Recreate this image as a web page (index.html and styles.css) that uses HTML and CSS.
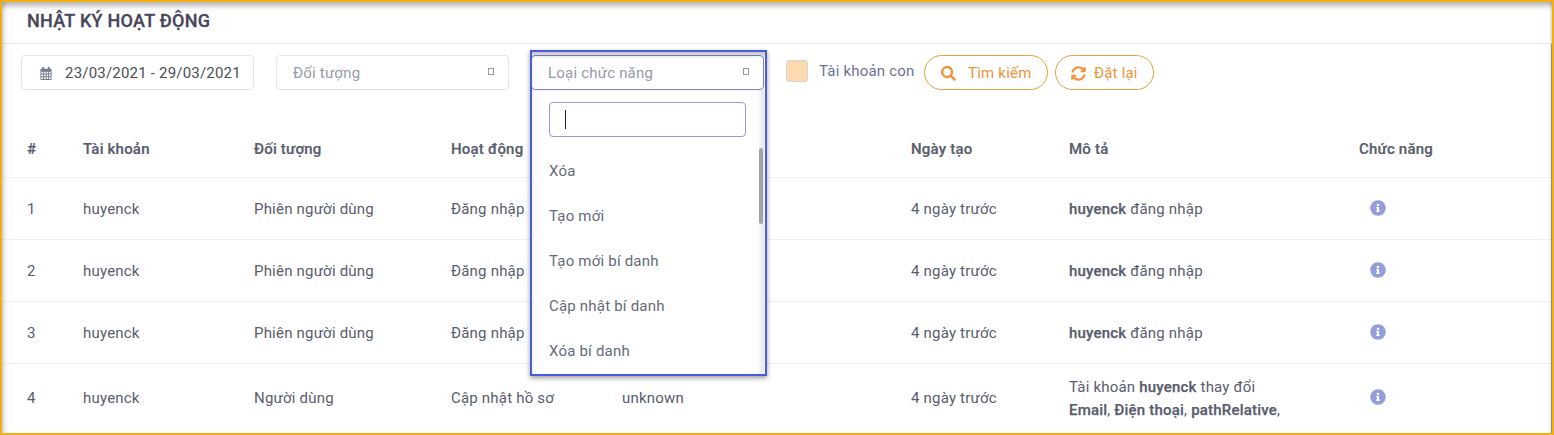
FILE: index.html
```html
<!DOCTYPE html>
<html lang="vi">
<head>
<meta charset="utf-8">
<title>Nhật ký hoạt động</title>
<link rel="stylesheet" href="styles.css">
</head>
<body>
<svg class="defs" width="0" height="0">
  <symbol id="info" viewBox="0 0 512 512"><path fill="currentColor" d="M256 8C119 8 8 119 8 256s111 248 248 248 248-111 248-248S393 8 256 8zm0 110c23 0 42 19 42 42s-19 42-42 42-42-19-42-42 19-42 42-42zm56 254c0 7-5 12-12 12h-88c-7 0-12-5-12-12v-24c0-7 5-12 12-12h12v-64h-12c-7 0-12-5-12-12v-24c0-7 5-12 12-12h64c7 0 12 5 12 12v100h12c7 0 12 5 12 12z"/></symbol>
</svg>
<main class="page">
  <header class="title-bar"><h1 class="title">NHẬT KÝ HOẠT ĐỘNG</h1></header>
  <section class="filters">
    <div class="field date">
      <svg class="calendar" viewBox="0 0 12 14"><path fill="currentColor" fill-rule="evenodd" d="M2 0h2v2h4V0h2v2h1q1 0 1 1v10q0 1-1 1H1q-1 0-1-1V3q0-1 1-1h1zM1 5v2h2V5zm3 0v2h1.700V5zm2.600 0v2h1.700V5zM9.200 5v2H11V5zM1 8v2h2V8zm3 0v2h1.700V8zm2.600 0v2h1.700V8zm2.600 0v2H11V8zM1 11v2h2v-2zm3 0v2h1.700v-2zm2.600 0v2h1.700v-2zm2.600 0v2H11v-2z"/></svg>
      <span>23/03/2021 - 29/03/2021</span>
    </div>
    <div class="field select"><span>Đối tượng</span><i class="box"></i></div>
    <div class="select-wrap">
      <div class="field select active"><span>Loại chức năng</span><i class="box"></i></div>
      <div class="menu">
        <div class="search"><i class="caret"></i></div>
        <ul class="options">
          <li>Xóa</li><li>Tạo mới</li><li>Tạo mới bí danh</li><li>Cập nhật bí danh</li><li>Xóa bí danh</li>
        </ul>
        <i class="thumb"></i>
      </div>
      <div class="highlight"></div>
    </div>
    <label class="check"><i class="tick"></i><span>Tài khoản con</span></label>
    <div class="button find">
      <svg viewBox="0 0 512 512"><path fill="currentColor" d="M505 442.700L405.300 343c-4.500-4.500-10.600-7-17-7H372c27.600-35.300 44-79.700 44-128C416 93.100 322.900 0 208 0S0 93.100 0 208s93.100 208 208 208c48.300 0 92.700-16.400 128-44v16.300c0 6.400 2.500 12.500 7 17l99.700 99.700c9.400 9.400 24.600 9.400 33.900 0l28.300-28.300c9.400-9.400 9.400-24.600.1-34zM208 336c-70.700 0-128-57.200-128-128 0-70.700 57.200-128 128-128 70.700 0 128 57.200 128 128 0 70.700-57.200 128-128 128z"/></svg>
      <span>Tìm kiếm</span>
    </div>
    <div class="button reset">
      <svg viewBox="0 0 512 512"><path fill="currentColor" d="M370.700 133.300C339.500 104 298.900 88 255.800 88c-77.500.1-144.300 53.200-162.800 126.900-1.300 5.400-6.100 9.100-11.700 9.100H24.100c-7.500 0-13.200-6.800-11.800-14.200C33.900 94.900 134.800 8 256 8c66.400 0 126.800 26.100 171.300 68.700L463 41c15.100-15.100 41-4.400 41 17v134c0 13.300-10.700 24-24 24H346c-21.400 0-32.100-25.900-17-41zM32 296h134c21.400 0 32.100 25.900 17 41l-41.800 41.800c31.300 29.300 71.800 45.300 114.900 45.300 77.400-.1 144.300-53.100 162.800-126.800 1.300-5.400 6.100-9.100 11.700-9.100h57.300c7.500 0 13.200 6.800 11.800 14.200C478.100 417.100 377.200 504 256 504c-66.400 0-126.800-26.100-171.300-68.700L49 471c-15.100 15.100-41 4.400-41-17V320c0-13.300 10.700-24 24-24z"/></svg>
      <span>Đặt lại</span>
    </div>
  </section>
  <section class="table">
    <div class="row head"><span>#</span><span>Tài khoản</span><span>Đối tượng</span><span>Hoạt động</span><span></span><span>Ngày tạo</span><span>Mô tả</span><span>Chức năng</span></div>
    <div class="row"><span>1</span><span>huyenck</span><span>Phiên người dùng</span><span>Đăng nhập</span><span></span><span>4 ngày trước</span><span><b>huyenck</b> đăng nhập</span><svg class="info"><use href="#info"/></svg></div>
    <div class="row"><span>2</span><span>huyenck</span><span>Phiên người dùng</span><span>Đăng nhập</span><span></span><span>4 ngày trước</span><span><b>huyenck</b> đăng nhập</span><svg class="info"><use href="#info"/></svg></div>
    <div class="row"><span>3</span><span>huyenck</span><span>Phiên người dùng</span><span>Đăng nhập</span><span></span><span>4 ngày trước</span><span><b>huyenck</b> đăng nhập</span><svg class="info"><use href="#info"/></svg></div>
    <div class="row last"><span>4</span><span>huyenck</span><span>Người dùng</span><span>Cập nhật hồ sơ</span><span>unknown</span><span>4 ngày trước</span><span>Tài khoản <b>huyenck</b> thay đổi<br><b>Email</b>, <b>Điện thoại</b>, <b>pathRelative</b>,</span><svg class="info"><use href="#info"/></svg></div>
  </section>
  <div class="frame"></div>
</main>
</body>
</html>
```
FILE: styles.css
```css
* { box-sizing: border-box; }
body { margin: 0; font: 15px/23px Roboto, "Noto Sans", sans-serif; letter-spacing: .2px; color: #595d6e; background: #fff; }
.defs { display: block; height: 0; }
.page { position: relative; height: 435px; overflow: hidden; }
.frame { position: absolute; inset: 0; border: 2px solid #f2ae12; box-shadow: inset 0 7px 5px -3px rgba(0,0,0,.28), inset 5px 0 4px -3px rgba(0,0,0,.2), inset -4px 0 3px -3px rgba(0,0,0,.2); pointer-events: none; }
.frame::after { content: ""; position: absolute; top: 42px; right: 0; bottom: 0; width: 1px; background: #8d8d92; }
.title-bar { height: 44px; padding: 9px 27px 0; border-bottom: 1px solid #e9e9ee; }
.title { margin: 0; font-size: 18px; line-height: 24px; font-weight: 500; letter-spacing: .27px; color: #48465b; -webkit-text-stroke: .3px; }
.filters { display: flex; height: 76px; padding: 11px 0 0 21px; }
.field { display: flex; align-items: center; width: 233px; height: 35px; border: 1px solid #e2e5ec; border-radius: 4px; background: #fff; }
.field span, .button span { padding-top: 2px; }
.date { padding-left: 18px; color: #495057; white-space: nowrap; }
.calendar { width: 12px; height: 13px; margin: 2px 13px 0 0; color: #74788d; }
.select { margin-left: 22px; padding: 0 14px 0 16px; justify-content: space-between; color: #959aad; }
.box { width: 6px; height: 7px; margin-top: -2px; border: 1px solid #969aa6; }
.select-wrap { position: relative; margin-left: 22px; }
.select-wrap .select { margin: 0; border-color: #8583c9; }
.menu { position: absolute; z-index: 2; top: 35px; left: 0; width: 233px; height: 285px; padding: 12px 18px 0; background: #fff; box-shadow: inset -4px 0 4px rgba(80,80,100,.12); }
.search { display: flex; align-items: center; width: 197px; height: 35px; padding-left: 15px; border: 1px solid #9a98d8; border-radius: 4px; }
.caret { width: 1px; height: 19px; background: #222; }
.options { display: grid; grid-auto-rows: 45px; align-items: center; margin: 12px 0 0; padding: 0; list-style: none; color: #646c7a; }
.thumb { position: absolute; top: 58px; right: 1px; width: 4px; height: 76px; border-radius: 2px; background: #a4a4a6; }
.highlight { position: absolute; z-index: 3; top: -5px; left: -1px; width: 237px; height: 326px; border: 2px solid #4a5cdc; box-shadow: 0 2px 5px rgba(0,0,0,.4), inset 0 5px 4px -2px rgba(0,0,0,.25); }
.check { display: flex; gap: 11px; margin: 5px 0 0 22px; white-space: nowrap; }
.check span { width: 95px; line-height: 22px; color: #6c7293; }
.tick { width: 22px; height: 22px; border: 1px solid #d9d4d2; border-radius: 3px; background: #fbdab0; }
.button { display: flex; align-items: center; height: 35px; border: 1px solid #e3a33c; border-radius: 18px; color: #ee943d; white-space: nowrap; }
.button svg { width: 15px; height: 15px; margin-top: 2px; }
.find { width: 124px; margin-left: 10px; padding-left: 16px; gap: 12px; }
.reset { width: 99px; margin-left: 7px; padding-left: 15px; gap: 8px; }
.row { display: grid; grid-template-columns: 56px 171px 197px 171px 289px 158px 290px 1fr; align-items: center; height: 62px; padding: 2px 0 0 27px; border-bottom: 1px solid #f0f1f5; white-space: nowrap; }
.head { height: 58px; font-weight: 500; -webkit-text-stroke: .2px; }
b { font-weight: 500; -webkit-text-stroke: .25px; }
.info { width: 16px; height: 16px; margin: -4px 0 0 11px; color: #949edb; }
.last { height: 69px; padding-top: 0; border: 0; }
```
